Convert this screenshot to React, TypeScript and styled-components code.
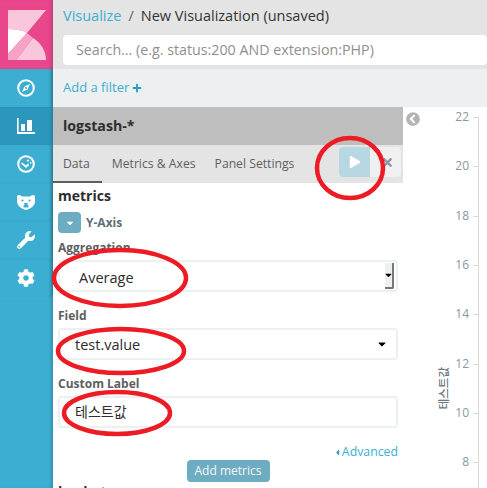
import React from "react";
import styled, { createGlobalStyle } from "styled-components";
import { FaCog, FaWrench, FaPlus, FaTimes, FaCaretDown, FaCaretLeft, FaPlay, FaChevronCircleLeft } from "react-icons/fa";

const Global = createGlobalStyle`
  html, body { margin: 0; padding: 0; height: 488px; overflow: hidden; background: #fff; }
  body { font-family: "Open Sans", "Noto Sans CJK KR", sans-serif; font-size: 14px; color: #2d2d2d; }
  * { box-sizing: border-box; }
`;

const Page = styled.div`
  position: relative;
  display: flex;
  width: 487px;
  height: 488px;
  overflow: hidden;
`;
const Sidebar = styled.nav`
  flex: 0 0 53px;
  background: #3caed2;
  box-shadow: inset -3px 0 3px -1px rgba(0, 0, 0, 0.16);
  display: flex;
  flex-direction: column;
`;
const LogoBox = styled.div`
  height: 69px;
  background: #e8488b;
  box-shadow: inset -3px 0 3px -1px rgba(0, 0, 0, 0.16);
  display: flex;
  align-items: center;
  justify-content: center;
`;
const NavItem = styled.div<{ $active?: boolean }>`
  height: 38px;
  display: flex;
  align-items: center;
  justify-content: center;
  padding-right: 1px;
  color: #fff;
  font-size: 18px;
  background: ${(p) => (p.$active ? "#2b97bd" : "transparent")};
  box-shadow: inset -3px 0 3px -1px rgba(0, 0, 0, 0.16);
`;
const Main = styled.div`
  flex: 1;
  min-width: 0;
  display: flex;
  flex-direction: column;
`;
const TopBar = styled.header`
  height: 69px;
  background: #e4e4e4;
  padding: 6px 10px 0;
`;
const Crumbs = styled.div`
  display: flex;
  align-items: center;
  height: 20px;
  font-size: 14.5px;
  line-height: 20px;
  margin-bottom: 9px;
`;
const CrumbLink = styled.span`
  color: #3caed2;
`;
const CrumbSep = styled.span`
  color: #5e5e5e;
  margin: 0 7px 0 7px;
`;
const CrumbCurrent = styled.span`
  color: #333;
`;
const Search = styled.div`
  height: 30px;
  background: #fff;
  border-radius: 4px;
  padding: 0 13px;
  line-height: 29px;
  font-size: 14.25px;
  color: #8f8f8f;
  white-space: nowrap;
  overflow: hidden;
  margin-right: -10px;
`;
const FilterBar = styled.div`
  height: 38px;
  background: #ecf0f1;
  padding: 0 10px 2px;
  display: flex;
  align-items: center;
  gap: 3px;
  color: #3caed2;
  font-size: 13px;
  svg { font-size: 10px; color: #2d9cc1; margin-top: 1px; }
`;
const Body = styled.div`
  flex: 1;
  min-height: 0;
  display: flex;
`;
const Panel = styled.section`
  flex: 0 0 350px;
  display: flex;
  flex-direction: column;
  min-height: 0;
`;
const IndexBar = styled.div`
  height: 38px;
  background: #bebebe;
  padding: 0 10px;
  line-height: 38px;
  font-weight: 700;
  font-size: 14.2px;
  color: #2d2d2d;
`;
const TabBar = styled.div`
  height: 38px;
  background: #e4e4e4;
  display: flex;
  align-items: stretch;
`;
const Tab = styled.div<{ $active?: boolean }>`
  padding: 0 ${(p) => (p.$active ? "12px" : "9px")} 0 10px;
  line-height: 37px;
  font-size: 12.2px;
  color: #5e5e5e;
  border-bottom: 2px solid ${(p) => (p.$active ? "#5e5e5e" : "transparent")};
`;
const TabActions = styled.div`
  margin-left: auto;
  margin-right: 2px;
  margin-top: 2px;
  height: 30px;
  display: flex;
  background: #f0f0f0;
  border-radius: 4px;
`;
const ApplyBtn = styled.div`
  width: 31px;
  background: #b7d7e2;
  border-radius: 4px 0 0 4px;
  display: flex;
  align-items: center;
  justify-content: center;
  color: #fff;
  font-size: 12px;
`;
const DiscardBtn = styled.div`
  width: 31px;
  display: flex;
  align-items: center;
  justify-content: center;
  padding-left: 3px;
  color: #8e9aa3;
  font-size: 13px;
`;
const Form = styled.div`
  padding: 4px 5px 0;
  flex: 1;
`;
const SectionTitle = styled.div`
  font-weight: 700;
  font-size: 14px;
  line-height: 18px;
  color: #2d2d2d;
`;
const MetricHead = styled.div`
  display: flex;
  align-items: center;
  gap: 5px;
  margin-top: 7px;
  height: 21px;
  font-size: 12px;
  font-weight: 700;
  color: #5e6e77;
`;
const Toggle = styled.div`
  width: 23px;
  height: 21px;
  border-radius: 4px;
  background: #6eadc1;
  color: #fff;
  font-size: 10px;
  display: flex;
  align-items: center;
  justify-content: center;
`;
const Label = styled.div<{ $top: number }>`
  font-size: 12px;
  line-height: 16px;
  font-weight: 700;
  color: #5e5e5e;
  margin-top: ${(p) => p.$top}px;
`;
const Control = styled.div<{ $indent?: number }>`
  height: 32px;
  margin-top: 4px;
  width: 340px;
  border: 2px solid #ecf0f1;
  border-radius: 4px;
  background: #fff;
  display: flex;
  align-items: center;
  padding-left: ${(p) => p.$indent ?? 15}px;
  padding-right: 9px;
  font-size: 14.5px;
  color: #2d2d2d;
`;
const Value = styled.span<{ $drop?: number }>`
  flex: 1;
  padding-top: ${(p) => p.$drop ?? 0}px;
`;
const KoreanValue = styled.span`
  flex: 1;
  font-size: 14px;
  padding-bottom: 3px;
`;
const Spin = styled.div`
  margin-right: -7px;
  margin-top: 1px;
  margin-bottom: 1px;
  width: 9px;
  align-self: stretch;
  background: #efefef;
  border-right: 2px solid #777;
  border-bottom: 2px solid #777;
  border-radius: 0 0 2px 0;
  display: flex;
  align-items: center;
  justify-content: center;
  color: #000;
  font-size: 10px;
`;
const Caret = styled.span`
  display: flex;
  color: #000;
  font-size: 12px;
  margin-right: -1px;
`;
const AdvancedRow = styled.div`
  margin-top: 16px;
  display: flex;
  justify-content: flex-end;
  width: 340px;
  align-items: center;
  font-size: 12.3px;
  line-height: 16px;
  color: #3caed2;
  svg { font-size: 9px; color: #2d9cc1; }
`;
const AddRow = styled.div`
  display: flex;
  justify-content: center;
  width: 340px;
`;
const AddBtn = styled.div`
  width: 83px;
  height: 22px;
  border-radius: 4px;
  background: #6eadc1;
  color: #f2f8fa;
  font-size: 12px;
  line-height: 21px;
  text-align: center;
`;
const Buckets = styled(SectionTitle)`
  margin-top: 1px;
`;
const ChartArea = styled.div`
  flex: 1;
  min-width: 0;
  position: relative;
  display: flex;
  align-items: flex-start;
  justify-content: flex-end;
`;
const Collapse = styled.div`
  position: absolute;
  left: 3px;
  top: 5px;
  color: #b3b3b3;
  font-size: 14px;
  display: flex;
`;
const AxisTitle = styled.div`
  height: 552px;
  margin-top: 5px;
  margin-right: 2px;
  width: 14px;
  display: flex;
  align-items: center;
`;
const AxisTitleText = styled.span`
  writing-mode: vertical-rl;
  text-orientation: sideways;
  transform: rotate(180deg);
  font-size: 11.5px;
  line-height: 14px;
  font-weight: 500;
  color: #6b7780;
`;
const Axis = styled.div`
  margin-top: 10px;
  height: 552px;
  width: 26px;
  margin-right: 8px;
  border-right: 1px solid #d8d8d8;
  display: flex;
  flex-direction: column;
`;
const Tick = styled.div`
  height: 49.35px;
  display: flex;
  align-items: flex-start;
  justify-content: flex-end;
  &::after {
    content: "";
    flex: 0 0 5px;
    height: 1px;
    margin-left: 4px;
    background: #d8d8d8;
  }
`;
const TickLabel = styled.span`
  font-size: 12px;
  line-height: 14px;
  margin-top: -7px;
  color: #8a97a3;
`;
const Overlay = styled.svg`
  position: absolute;
  inset: 0;
  pointer-events: none;
`;

const Logo = () => (
  <svg width="38" height="50" viewBox="0 0 38 50">
    <path d="M0 0H38L19 23C14 20 7 19 0 19Z" fill="#f9c6dc" />
    <path d="M0 19C7 19 14 20 19 23L0 44Z" fill="#fff" />
    <path d="M25 28C33 33 38 41 38 50H8Z" fill="#f9c6dc" />
    <path d="M19 23L25 28L8 50H0V44Z" fill="#f6a3c6" />
  </svg>
);
const Compass = () => (
  <svg width="18" height="18" viewBox="0 0 18 18">
    <circle cx="9" cy="9" r="7.8" fill="none" stroke="#fff" strokeWidth="2" />
    <path d="M13 5L10.5 10.5L5 13L7.5 7.5Z" fill="#fff" />
    <circle cx="9" cy="9" r="1" fill="#3caed2" />
  </svg>
);
const Bars = () => (
  <svg width="18" height="16" viewBox="0 0 18 16">
    <path d="M0 0H1.6V14H18V16H0Z" fill="#fff" />
    <rect x="4" y="6" width="4" height="7" fill="#fff" />
    <rect x="10" y="2" width="5" height="11" fill="#fff" />
  </svg>
);
const Timelion = () => (
  <svg width="18" height="18" viewBox="0 0 18 18">
    <circle cx="9" cy="9" r="7.8" fill="none" stroke="#fff" strokeWidth="2" />
    <path d="M5 7.5L9 10.5L11 8.5L12.2 10L9 13L4 8.5Z" fill="#fff" />
    <circle cx="11" cy="5.5" r="1.1" fill="#fff" />
    <circle cx="13.6" cy="7.8" r="0.9" fill="#fff" />
  </svg>
);
const Bear = () => (
  <svg width="18" height="15" viewBox="0 0 18 15">
    <path d="M0 1.5C0 .4 1.5 0 3 0L5 1.5H13L15 0C16.5 0 18 .4 18 1.5V6C18 10 15 13.5 9 15C3 13.5 0 10 0 6Z" fill="#fff" />
    <circle cx="5.5" cy="5.5" r="1.1" fill="#3caed2" />
    <circle cx="12.5" cy="5.5" r="1.1" fill="#3caed2" />
    <path d="M7 8H11L10.4 10H11.4V12.5H6.6V10H7.6Z" fill="#3caed2" />
  </svg>
);

const ticks = [22, 20, 18, 16, 14, 12, 10, 8];

export default function App() {
  return (
    <Page>
      <Global />
      <Sidebar>
        <LogoBox><Logo /></LogoBox>
        <NavItem><Compass /></NavItem>
        <NavItem $active><Bars /></NavItem>
        <NavItem><Timelion /></NavItem>
        <NavItem><Bear /></NavItem>
        <NavItem><FaWrench /></NavItem>
        <NavItem><FaCog /></NavItem>
      </Sidebar>
      <Main>
        <TopBar>
          <Crumbs>
            <CrumbLink>Visualize</CrumbLink>
            <CrumbSep>/</CrumbSep>
            <CrumbCurrent>New Visualization (unsaved)</CrumbCurrent>
          </Crumbs>
          <Search>Search... (e.g. status:200 AND extension:PHP)</Search>
        </TopBar>
        <FilterBar>Add a filter <FaPlus /></FilterBar>
        <Body>
          <Panel>
            <IndexBar>logstash-*</IndexBar>
            <TabBar>
              <Tab $active>Data</Tab>
              <Tab>Metrics &amp; Axes</Tab>
              <Tab>Panel Settings</Tab>
              <TabActions>
                <ApplyBtn><FaPlay /></ApplyBtn>
                <DiscardBtn><FaTimes /></DiscardBtn>
              </TabActions>
            </TabBar>
            <Form>
              <SectionTitle>metrics</SectionTitle>
              <MetricHead><Toggle><FaCaretDown /></Toggle>Y-Axis</MetricHead>
              <Label $top={7}>Aggregation</Label>
              <Control $indent={19}>
                <Value $drop={3}>Average</Value>
                <Spin><FaCaretDown /></Spin>
              </Control>
              <Label $top={16}>Field</Label>
              <Control>
                <Value>test.value</Value>
                <Caret><FaCaretDown /></Caret>
              </Control>
              <Label $top={16}>Custom Label</Label>
              <Control>
                <KoreanValue>테스트값</KoreanValue>
              </Control>
              <AdvancedRow><FaCaretLeft />Advanced</AdvancedRow>
              <AddRow><AddBtn>Add metrics</AddBtn></AddRow>
              <Buckets>buckets</Buckets>
            </Form>
          </Panel>
          <ChartArea>
            <Collapse><FaChevronCircleLeft /></Collapse>
            <AxisTitle><AxisTitleText>테스트값</AxisTitleText></AxisTitle>
            <Axis>
              {ticks.map((t) => <Tick key={t}><TickLabel>{t}</TickLabel></Tick>)}
            </Axis>
          </ChartArea>
        </Body>
      </Main>
      <Overlay width="487" height="488" viewBox="0 0 487 488">
        <g fill="none" stroke="#ed1c24" strokeWidth="4.5">
          <ellipse cx="350" cy="168" rx="33" ry="30" />
          <ellipse cx="120" cy="278" rx="66" ry="28" />
          <ellipse cx="121" cy="351" rx="63" ry="22" />
          <ellipse cx="117" cy="413" rx="53" ry="21" />
        </g>
      </Overlay>
    </Page>
  );
}
